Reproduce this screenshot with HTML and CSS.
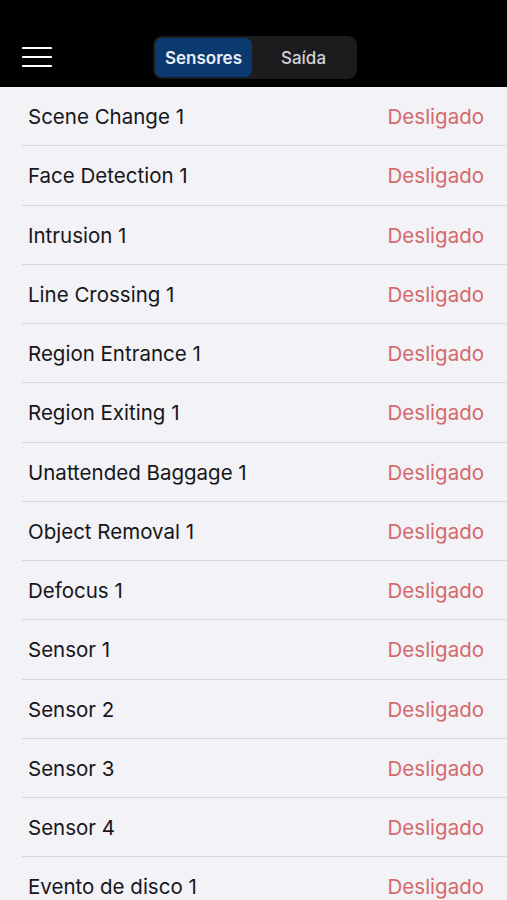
FILE: index.html
```html
<!DOCTYPE html>
<html lang="pt">
<head>
    <meta charset="UTF-8">
    <meta name="viewport" content="width=device-width, initial-scale=1.0">
    <title>Sensores</title>
    <link rel="stylesheet" href="styles.css">
</head>
<body>
    <header class="topbar">
        <button class="menu-btn" aria-label="Menu">
            <svg width="30" height="22" viewBox="0 0 30 22">
                <path d="M1 2h28M1 11h28M1 20h28" stroke="#fff" stroke-width="2.2" stroke-linecap="round"/>
            </svg>
        </button>
        <div class="segmented">
            <span class="segment active">Sensores</span>
            <span class="segment">Saída</span>
        </div>
    </header>

    <ul class="list">
        <li class="row"><span class="name">Scene Change 1</span><span class="state">Desligado</span></li>
        <li class="row"><span class="name">Face Detection 1</span><span class="state">Desligado</span></li>
        <li class="row"><span class="name">Intrusion 1</span><span class="state">Desligado</span></li>
        <li class="row"><span class="name">Line Crossing 1</span><span class="state">Desligado</span></li>
        <li class="row"><span class="name">Region Entrance 1</span><span class="state">Desligado</span></li>
        <li class="row"><span class="name">Region Exiting 1</span><span class="state">Desligado</span></li>
        <li class="row"><span class="name">Unattended Baggage 1</span><span class="state">Desligado</span></li>
        <li class="row"><span class="name">Object Removal 1</span><span class="state">Desligado</span></li>
        <li class="row"><span class="name">Defocus 1</span><span class="state">Desligado</span></li>
        <li class="row"><span class="name">Sensor 1</span><span class="state">Desligado</span></li>
        <li class="row"><span class="name">Sensor 2</span><span class="state">Desligado</span></li>
        <li class="row"><span class="name">Sensor 3</span><span class="state">Desligado</span></li>
        <li class="row"><span class="name">Sensor 4</span><span class="state">Desligado</span></li>
        <li class="row"><span class="name">Evento de disco 1</span><span class="state">Desligado</span></li>
    </ul>
</body>
</html>
```

FILE: styles.css
```css
body {
    margin: 0;
    font-family: Inter, "Noto Sans", sans-serif;
    background-color: #f2f2f7;
    overflow: hidden;
}

.topbar {
    height: 87px;
    background-color: #000;
    display: flex;
    align-items: flex-end;
    padding: 0 0 8px 22px;
    box-sizing: border-box;
}

.menu-btn {
    background: none;
    border: none;
    padding: 0;
    margin-bottom: 11px;
    width: 30px;
    height: 22px;
    display: flex;
}

.segmented {
    margin-left: 101px;
    width: 204px;
    height: 43px;
    box-sizing: border-box;
    padding: 2px;
    background-color: #1c1c1e;
    border-radius: 9px;
    display: flex;
}

.segment {
    flex: 1;
    display: flex;
    align-items: center;
    justify-content: center;
    color: #d1d1d6;
    font-size: 17px;
    font-weight: 500;
    border-radius: 7px;
}

.segment.active {
    flex: 0 0 97px;
    background-color: #0b3a70;
    color: #e9eef5;
    font-weight: 600;
}

.list {
    list-style: none;
    margin: 0 0 0 22px;
    padding: 0;
}

.row {
    height: 59.25px;
    box-sizing: border-box;
    display: flex;
    align-items: center;
    justify-content: space-between;
    padding: 1px 23px 0 6px;
    border-bottom: 1px solid #d8d8dc;
    font-size: 20.5px;
}

.name {
    color: #161618;
}

.state {
    color: #d46a6a;
}
```
